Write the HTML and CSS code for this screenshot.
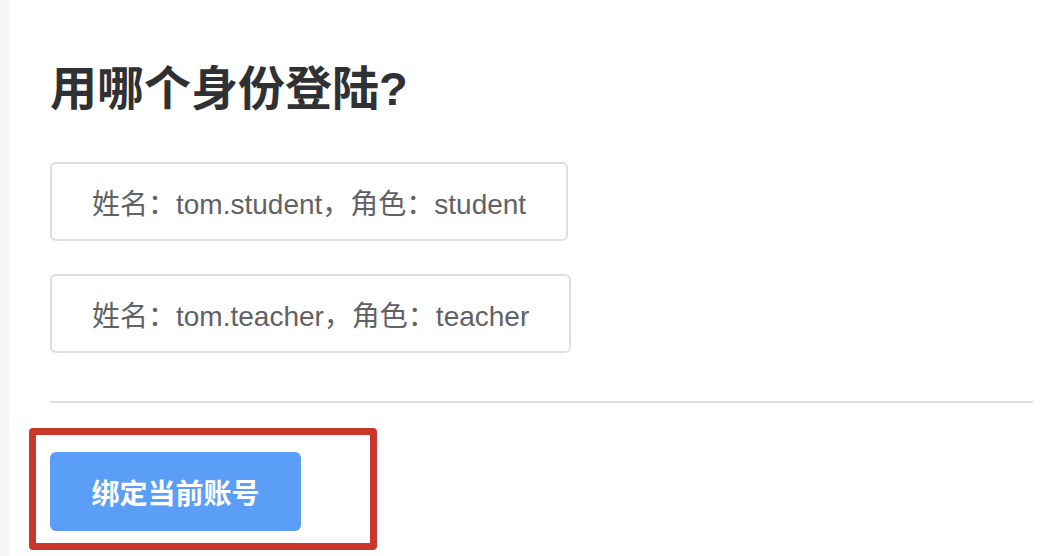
FILE: index.html
```html
<!DOCTYPE html>
<html lang="zh-CN">
<head>
<meta charset="utf-8">
<title>用哪个身份登陆?</title>
<link rel="stylesheet" href="styles.css">
</head>
<body>
<div class="page">
  <div class="side-strip"></div>
  <main class="content">
    <h1 class="title">用哪个身份登陆?</h1>
    <div class="identity-list">
      <div class="identity">姓名：tom.student，角色：student</div>
      <div class="identity">姓名：tom.teacher，角色：teacher</div>
    </div>
    <hr class="divider">
    <div class="actions">
      <button class="bind-btn">绑定当前账号</button>
      <div class="highlight"></div>
    </div>
  </main>
</div>
</body>
</html>
```
FILE: styles.css
```css
* { box-sizing: border-box; }
html, body {
  margin: 0;
  padding: 0;
  background: #ffffff;
  width: 1054px;
  height: 556px;
  overflow: hidden;
  font-family: "Liberation Sans", "Noto Sans CJK SC", sans-serif;
}
.page {
  display: flex;
  height: 556px;
}
.side-strip {
  width: 9px;
  flex: none;
  background: #f5f6f8;
}
.content {
  flex: 1;
  padding: 0 21px 0 41px;
}
.title {
  margin: 56px 0 0 0;
  font-size: 47px;
  line-height: 66px;
  font-weight: 700;
  color: #303133;
  font-family: "Liberation Sans", "Noto Sans CJK SC", sans-serif;
}
.identity-list {
  margin-top: 40px;
  display: flex;
  flex-direction: column;
  align-items: flex-start;
  gap: 33px;
}
.identity {
  height: 79px;
  border: 2px solid #dcdfe6;
  border-radius: 6px;
  padding: 0 40px;
  display: flex;
  align-items: center;
  font-size: 28px;
  color: #606266;
  white-space: nowrap;
}
.divider {
  margin: 48px 0 0 0;
  border: none;
  height: 2px;
  background: #dcdfe6;
}
.actions {
  position: relative;
  padding-top: 49px;
}
.bind-btn {
  width: 251px;
  height: 79px;
  border: none;
  border-radius: 6px;
  background: #5a9ef8;
  color: #ffffff;
  font-size: 28px;
  font-weight: 700;
  font-family: "Liberation Sans", "Noto Sans CJK SC", sans-serif;
  padding: 0;
}
.highlight {
  position: absolute;
  left: -21px;
  top: 25px;
  width: 348px;
  height: 122px;
  border: 7px solid #c9362a;
  border-radius: 4px;
  pointer-events: none;
}
```
